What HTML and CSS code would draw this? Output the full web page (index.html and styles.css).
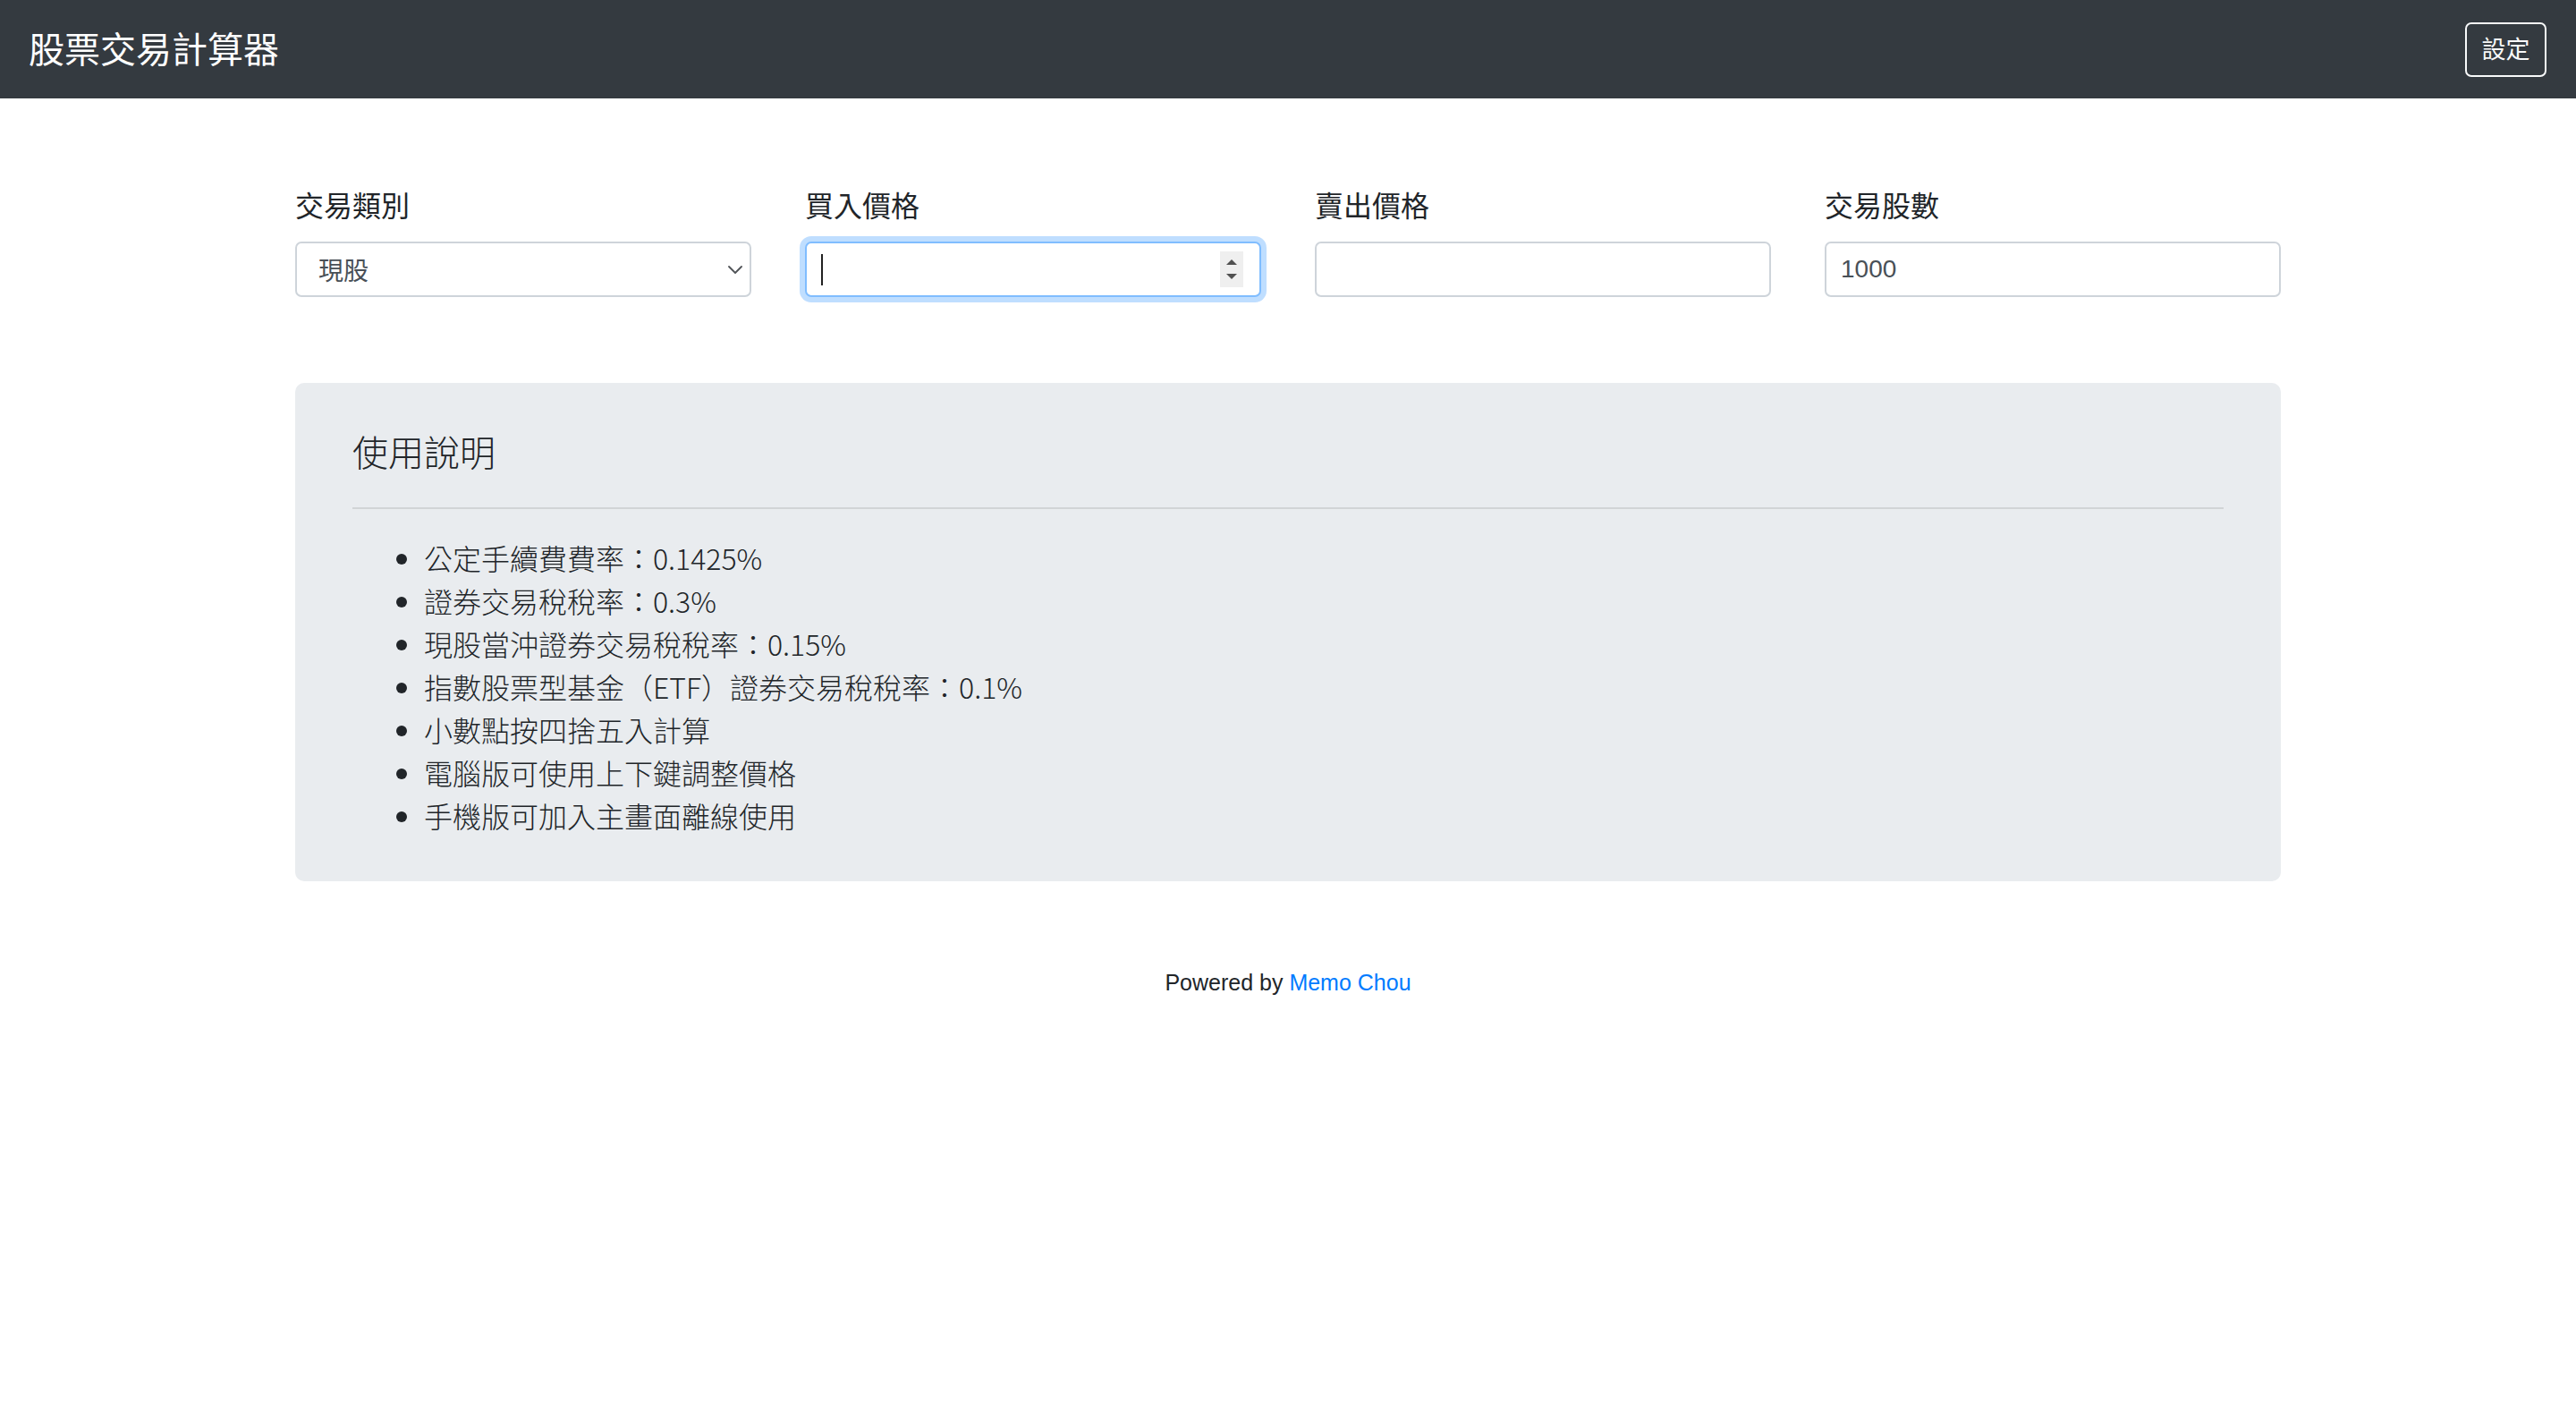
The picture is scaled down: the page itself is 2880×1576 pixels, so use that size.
FILE: index.html
```html
<!DOCTYPE html>
<html lang="zh-Hant">
<head>
<meta charset="utf-8">
<title>股票交易計算器</title>
<link rel="stylesheet" href="styles.css">
</head>
<body>
<nav class="navbar">
  <span class="brand">股票交易計算器</span>
  <button class="btn-settings" type="button">設定</button>
</nav>
<main class="container">
  <form class="form-row">
    <div class="field">
      <label class="field-label" for="type">交易類別</label>
      <div class="control-wrap">
        <select class="control select" id="type">
          <option>現股</option>
          <option>現股當沖</option>
          <option>ETF</option>
        </select>
        <svg class="chevron" width="16" height="9" viewBox="0 0 16 9" aria-hidden="true">
          <path d="M1 1 L8 8 L15 1" fill="none" stroke="#505357" stroke-width="1.8" stroke-linecap="round" stroke-linejoin="round"/>
        </svg>
      </div>
    </div>
    <div class="field">
      <label class="field-label" for="buy">買入價格</label>
      <div class="control-wrap">
        <input class="control focused" id="buy" type="text" inputmode="decimal">
        <span class="caret"></span>
        <span class="spinner" aria-hidden="true">
          <svg width="26" height="40" viewBox="0 0 26 40">
            <path d="M7 15 L13 9 L19 15 Z" fill="#505050"/>
            <path d="M7 25 L13 31 L19 25 Z" fill="#505050"/>
          </svg>
        </span>
      </div>
    </div>
    <div class="field">
      <label class="field-label" for="sell">賣出價格</label>
      <div class="control-wrap">
        <input class="control" id="sell" type="text">
      </div>
    </div>
    <div class="field">
      <label class="field-label" for="qty">交易股數</label>
      <div class="control-wrap">
        <input class="control" id="qty" type="text" value="1000">
      </div>
    </div>
  </form>

  <section class="card">
    <h5 class="card-title">使用說明</h5>
    <hr class="divider">
    <ul class="notes">
      <li>公定手續費費率：0.1425%</li>
      <li>證券交易稅稅率：0.3%</li>
      <li>現股當沖證券交易稅稅率：0.15%</li>
      <li>指數股票型基金（ETF）證券交易稅稅率：0.1%</li>
      <li>小數點按四捨五入計算</li>
      <li>電腦版可使用上下鍵調整價格</li>
      <li>手機版可加入主畫面離線使用</li>
    </ul>
  </section>

  <footer class="footer">Powered by <a class="footer-link" href="#">Memo Chou</a></footer>
</main>
</body>
</html>
```
FILE: styles.css
```css
* {
  box-sizing: border-box;
}

html, body {
  margin: 0;
  padding: 0;
}

body {
  background: #ffffff;
  color: #212529;
  font-family: "Liberation Sans", "Noto Sans CJK TC", sans-serif;
  font-size: 32px;
  line-height: 1.5;
}

.navbar {
  height: 110px;
  background: #343a40;
  display: flex;
  align-items: center;
  justify-content: space-between;
  padding: 0 33px 0 32px;
}

.brand {
  color: #ffffff;
  font-size: 40px;
  line-height: 60px;
  margin-top: -5px;
  font-family: "Noto Sans CJK TC", sans-serif;
  font-weight: 400;
}

.btn-settings {
  height: 61px;
  width: 91px;
  padding: 0 0 3px;
  background: transparent;
  border: 2px solid #f8f9fa;
  border-radius: 7px;
  color: #f8f9fa;
  font-family: "Noto Sans CJK TC", sans-serif;
  font-size: 27px;
  line-height: 1;
}

.container {
  width: 2220px;
  margin: 0 auto;
  padding-top: 94px;
}

.form-row {
  display: grid;
  grid-template-columns: repeat(4, 1fr);
  column-gap: 60px;
  margin: 0 0 96px;
}

.field-label {
  display: block;
  font-family: "Noto Sans CJK TC", sans-serif;
  font-size: 32px;
  line-height: 48px;
  margin-bottom: 18px;
  color: #212529;
}

.control-wrap {
  position: relative;
}

.control {
  display: block;
  width: 100%;
  height: 62px;
  padding: 0 16px;
  border: 2px solid #ced4da;
  border-radius: 7px;
  background: #ffffff;
  color: #495057;
  font-family: "Liberation Sans", "Noto Sans CJK TC", sans-serif;
  font-size: 28px;
  outline: none;
}

.select {
  -webkit-appearance: none;
  appearance: none;
  padding-left: 24px;
  font-family: "Noto Sans CJK TC", sans-serif;
}

.chevron {
  position: absolute;
  right: 10px;
  top: 27px;
}

.focused {
  border-color: #80bdff;
  box-shadow: 0 0 0 6px rgba(0, 123, 255, 0.25);
}

.caret {
  position: absolute;
  left: 18px;
  top: 14px;
  width: 2px;
  height: 35px;
  background: #222;
}

.spinner {
  position: absolute;
  right: 20px;
  top: 11px;
  width: 26px;
  height: 40px;
  background: #efefef;
  display: flex;
}

.card {
  background: #e9ecef;
  border-radius: 10px;
  padding: 46px 64px 50px;
}

.card-title {
  margin: 0;
  font-family: "Noto Sans CJK TC", sans-serif;
  font-size: 40px;
  line-height: 60px;
  font-weight: 300;
  color: #212529;
}

.divider {
  margin: 33px 0 30px;
  border: 0;
  border-top: 2px solid rgba(0, 0, 0, 0.1);
  height: 0;
}

.notes {
  margin: 0;
  padding-left: 80px;
  font-family: "Noto Sans CJK TC", sans-serif;
  font-size: 32px;
  line-height: 48px;
  font-weight: 300;
  color: #212529;
}

.footer {
  margin-top: 92px;
  text-align: center;
  font-family: "Liberation Sans", "Noto Sans CJK TC", sans-serif;
  font-size: 25px;
  line-height: 42px;
  color: #212529;
}

.footer-link {
  color: #007bff;
  text-decoration: none;
}
```
